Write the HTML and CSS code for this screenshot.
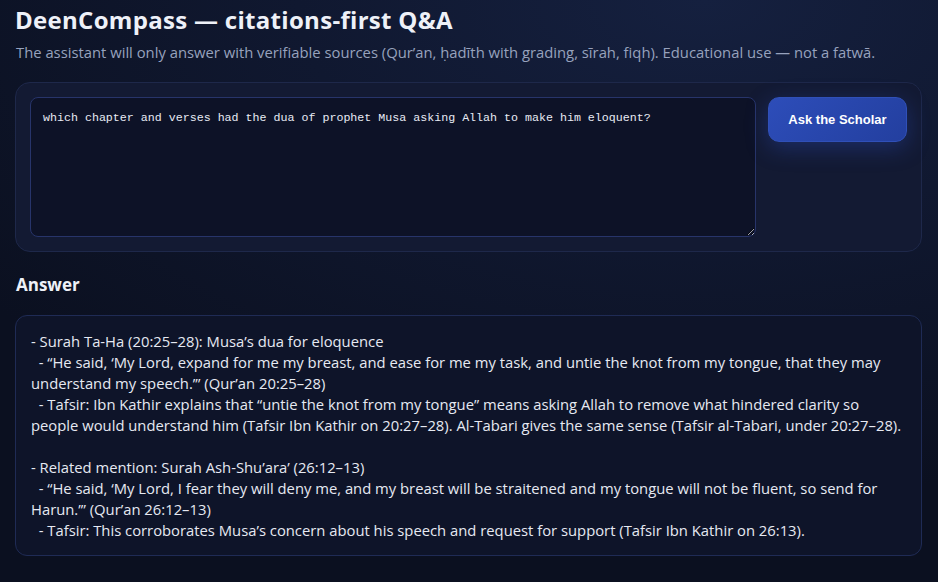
FILE: index.html
```html
<!DOCTYPE html>
<html lang="en">
<head>
<meta charset="utf-8">
<title>DeenCompass</title>
<link rel="stylesheet" href="styles.css">
</head>
<body>
<main class="page">
  <header class="head">
    <h1 class="title">DeenCompass — citations-first Q&amp;A</h1>
    <p class="subtitle">The assistant will only answer with verifiable sources (Qur’an, ḥadīth with grading, sīrah, fiqh). Educational use — not a fatwā.</p>
  </header>
  <section class="ask">
    <textarea class="question">which chapter and verses had the dua of prophet Musa asking Allah to make him eloquent?</textarea>
    <button class="ask-btn" type="button">Ask the Scholar</button>
  </section>
  <h2 class="answer-title">Answer</h2>
  <div class="answer">- Surah Ta-Ha (20:25–28): Musa’s dua for eloquence
  - “He said, ‘My Lord, expand for me my breast, and ease for me my task, and untie the knot from my tongue, that they may understand my speech.’” (Qur’an 20:25–28)
  - Tafsir: Ibn Kathir explains that “untie the knot from my tongue” means asking Allah to remove what hindered clarity so people would understand him (Tafsir Ibn Kathir on 20:27–28). Al-Tabari gives the same sense (Tafsir al-Tabari, under 20:27–28).

- Related mention: Surah Ash-Shu’ara’ (26:12–13)
  - “He said, ‘My Lord, I fear they will deny me, and my breast will be straitened and my tongue will not be fluent, so send for Harun.’” (Qur’an 26:12–13)
  - Tafsir: This corroborates Musa’s concern about his speech and request for support (Tafsir Ibn Kathir on 26:13).</div>
</main>
</body>
</html>
```
FILE: styles.css
```css
* { box-sizing: border-box; }
html, body { height: 100%; }
body {
  margin: 0;
  background: radial-gradient(ellipse 900px 500px at 75% 0%, #15203f 0%, #101830 45%, #0b1020 100%) #0b1020;
  color: #e6e9f2;
  font-family: "Open Sans", "Noto Sans", sans-serif;
}
.page {
  padding: 4px 16px 20px 15px;
  display: flex;
  flex-direction: column;
}
.title {
  margin: 0;
  font-size: 24px;
  line-height: 32px;
  font-weight: 700;
  letter-spacing: 0.3px;
  color: #eef1f8;
}
.subtitle {
  margin: 6px 0 0 1px;
  font-size: 14.8px;
  line-height: 20px;
  color: #97a2bd;
}
.ask {
  margin-top: 20px;
  display: flex;
  align-items: flex-start;
  gap: 12px;
  padding: 14px;
  background: #131a33;
  border: 1px solid #1e284a;
  border-radius: 15px;
}
.question {
  flex: 1;
  height: 140px;
  padding: 12px;
  background: #0d1227;
  border: 1px solid #27346a;
  border-radius: 8px;
  color: #e8ebf4;
  font-family: "Liberation Mono", monospace;
  font-size: 11.65px;
  line-height: 16px;
  resize: vertical;
  outline: none;
}
.ask-btn {
  width: 139px;
  height: 45px;
  border: 1px solid #3050b8;
  border-radius: 11px;
  background: linear-gradient(135deg, #2d4db9, #233f9f);
  color: #ffffff;
  font-family: "Liberation Sans", Arial, sans-serif;
  font-weight: 700;
  font-size: 13px;
  box-shadow: 0 6px 22px rgba(45, 80, 200, 0.35);
  cursor: pointer;
}
.answer-title {
  margin: 21px 0 0 1px;
  font-size: 17px;
  line-height: 24px;
  font-weight: 700;
  color: #eef1f8;
}
.answer {
  margin-top: 18px;
  padding: 15px 13px 14px 15px;
  background: #0e1429;
  border: 1px solid #1f2b55;
  border-radius: 12px;
  white-space: pre-wrap;
  font-size: 14.8px;
  line-height: 21px;
  color: #e6e9f2;
}
```
